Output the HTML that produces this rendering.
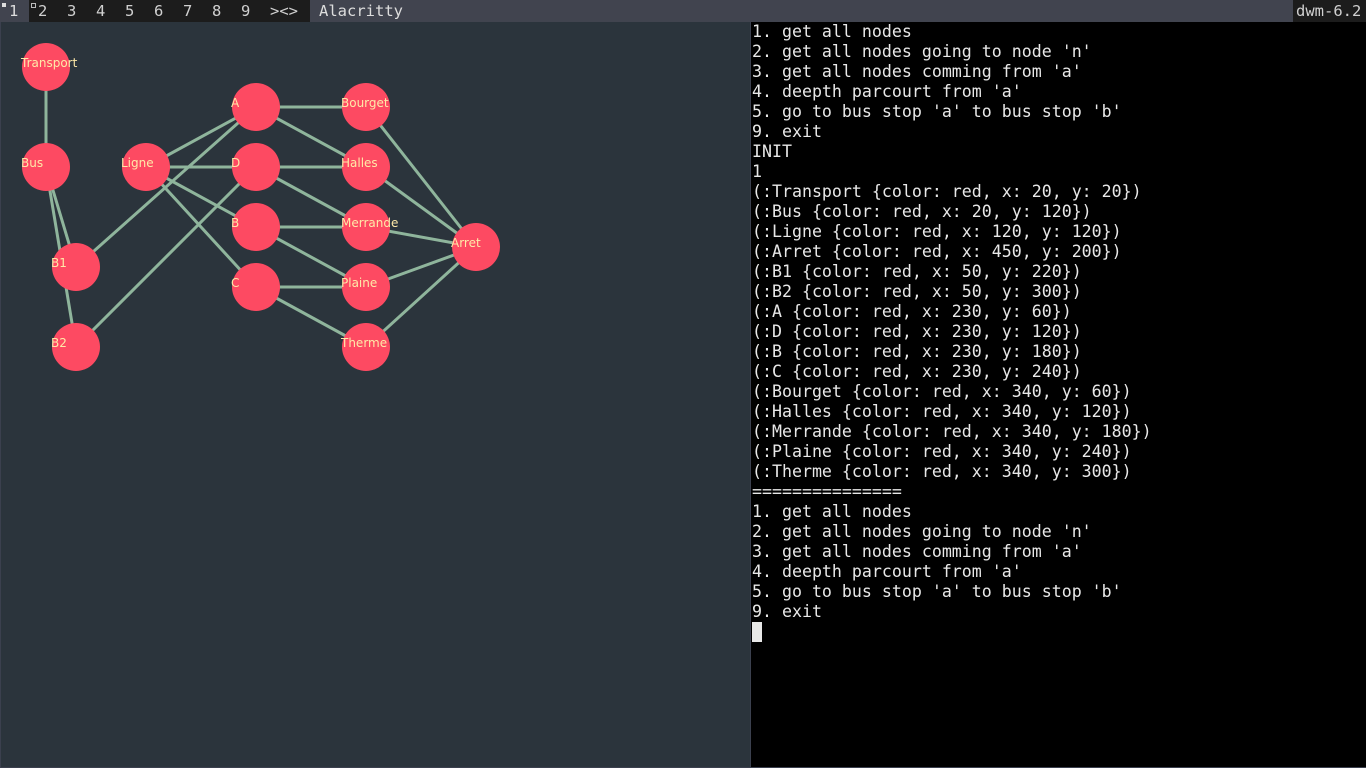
<!DOCTYPE html>
<html><head><meta charset="utf-8"><style>
html,body{margin:0;padding:0;width:1366px;height:768px;overflow:hidden;background:#3b404e}
.bar{position:absolute;left:0;top:0;width:1366px;height:22px;background:#1c1c1c;font-family:"DejaVu Sans Mono","Liberation Mono",monospace;font-size:15.5px;color:#d0d0d0}
.bar span{position:absolute;top:0;height:22px;line-height:22px}
.left{position:absolute;left:1px;top:22px;width:749px;height:745px;background:#2b343c}
.term{position:absolute;left:751px;top:22px;width:615px;height:745px;background:#000;color:#e8e8e8;font-family:"DejaVu Sans Mono","Liberation Mono",monospace;font-size:16.6px;line-height:20px;white-space:pre}
.term div{position:absolute;left:1px;top:0}
</style></head><body>
<div class="bar">
<span style="left:0;width:29px;background:#41444f"></span>
<span style="left:2px;top:3px;width:4px;height:4px;background:#ddd"></span>
<span style="left:9px;color:#ddd">1</span>
<span style="left:31px;top:3px;width:3px;height:3px;border:1px solid #bbb"></span>
<span style="left:38px">2</span><span style="left:67px">3</span><span style="left:96px">4</span><span style="left:125px">5</span><span style="left:154px">6</span><span style="left:183px">7</span><span style="left:212px">8</span><span style="left:241px">9</span><span style="left:270px">&gt;&lt;&gt;</span>
<span style="left:310px;width:983px;background:#41444f;padding-left:9px;box-sizing:border-box;color:#ddd">Alacritty</span>
<span style="left:1293px;padding-left:3px">dwm-6.2</span>
</div>
<div class="left">
<svg width="749" height="745" viewBox="1 22 749 745" style="position:absolute;left:0;top:0">
<g stroke="#8fb59c" stroke-width="3">
<line x1="46" y1="67" x2="46" y2="167"/>
<line x1="46" y1="167" x2="76" y2="267"/>
<line x1="46" y1="167" x2="76" y2="347"/>
<line x1="146" y1="167" x2="256" y2="107"/>
<line x1="146" y1="167" x2="256" y2="167"/>
<line x1="146" y1="167" x2="256" y2="227"/>
<line x1="146" y1="167" x2="256" y2="287"/>
<line x1="76" y1="267" x2="256" y2="107"/>
<line x1="76" y1="347" x2="256" y2="167"/>
<line x1="256" y1="107" x2="366" y2="107"/>
<line x1="256" y1="107" x2="366" y2="167"/>
<line x1="256" y1="167" x2="366" y2="167"/>
<line x1="256" y1="167" x2="366" y2="227"/>
<line x1="256" y1="227" x2="366" y2="227"/>
<line x1="256" y1="227" x2="366" y2="287"/>
<line x1="256" y1="287" x2="366" y2="287"/>
<line x1="256" y1="287" x2="366" y2="347"/>
<line x1="366" y1="107" x2="476" y2="247"/>
<line x1="366" y1="167" x2="476" y2="247"/>
<line x1="366" y1="227" x2="476" y2="247"/>
<line x1="366" y1="287" x2="476" y2="247"/>
<line x1="366" y1="347" x2="476" y2="247"/>
</g>
<g fill="#fd4a62">
<circle cx="46" cy="67" r="24"/><circle cx="46" cy="167" r="24"/><circle cx="146" cy="167" r="24"/>
<circle cx="476" cy="247" r="24"/><circle cx="76" cy="267" r="24"/><circle cx="76" cy="347" r="24"/>
<circle cx="256" cy="107" r="24"/><circle cx="256" cy="167" r="24"/><circle cx="256" cy="227" r="24"/><circle cx="256" cy="287" r="24"/>
<circle cx="366" cy="107" r="24"/><circle cx="366" cy="167" r="24"/><circle cx="366" cy="227" r="24"/><circle cx="366" cy="287" r="24"/><circle cx="366" cy="347" r="24"/>
</g>
<g fill="#ffe9a8" font-family="DejaVu Sans, sans-serif" font-size="12">
<text x="21" y="67">Transport</text><text x="21" y="167">Bus</text><text x="121" y="167">Ligne</text>
<text x="451" y="247">Arret</text><text x="51" y="267">B1</text><text x="51" y="347">B2</text>
<text x="231" y="107">A</text><text x="231" y="167">D</text><text x="231" y="227">B</text><text x="231" y="287">C</text>
<text x="341" y="107">Bourget</text><text x="341" y="167">Halles</text><text x="341" y="227">Merrande</text><text x="341" y="287">Plaine</text><text x="341" y="347">Therme</text>
</g>
</svg>
</div>
<div class="term"><div>1. get all nodes
2. get all nodes going to node 'n'
3. get all nodes comming from 'a'
4. deepth parcourt from 'a'
5. go to bus stop 'a' to bus stop 'b'
9. exit
INIT
1
(:Transport {color: red, x: 20, y: 20})
(:Bus {color: red, x: 20, y: 120})
(:Ligne {color: red, x: 120, y: 120})
(:Arret {color: red, x: 450, y: 200})
(:B1 {color: red, x: 50, y: 220})
(:B2 {color: red, x: 50, y: 300})
(:A {color: red, x: 230, y: 60})
(:D {color: red, x: 230, y: 120})
(:B {color: red, x: 230, y: 180})
(:C {color: red, x: 230, y: 240})
(:Bourget {color: red, x: 340, y: 60})
(:Halles {color: red, x: 340, y: 120})
(:Merrande {color: red, x: 340, y: 180})
(:Plaine {color: red, x: 340, y: 240})
(:Therme {color: red, x: 340, y: 300})
===============
1. get all nodes
2. get all nodes going to node 'n'
3. get all nodes comming from 'a'
4. deepth parcourt from 'a'
5. go to bus stop 'a' to bus stop 'b'
9. exit</div>
<div style="left:1px;top:600px;width:10px;height:20px;background:#e8e8e8"></div>
</div>
</body></html>
